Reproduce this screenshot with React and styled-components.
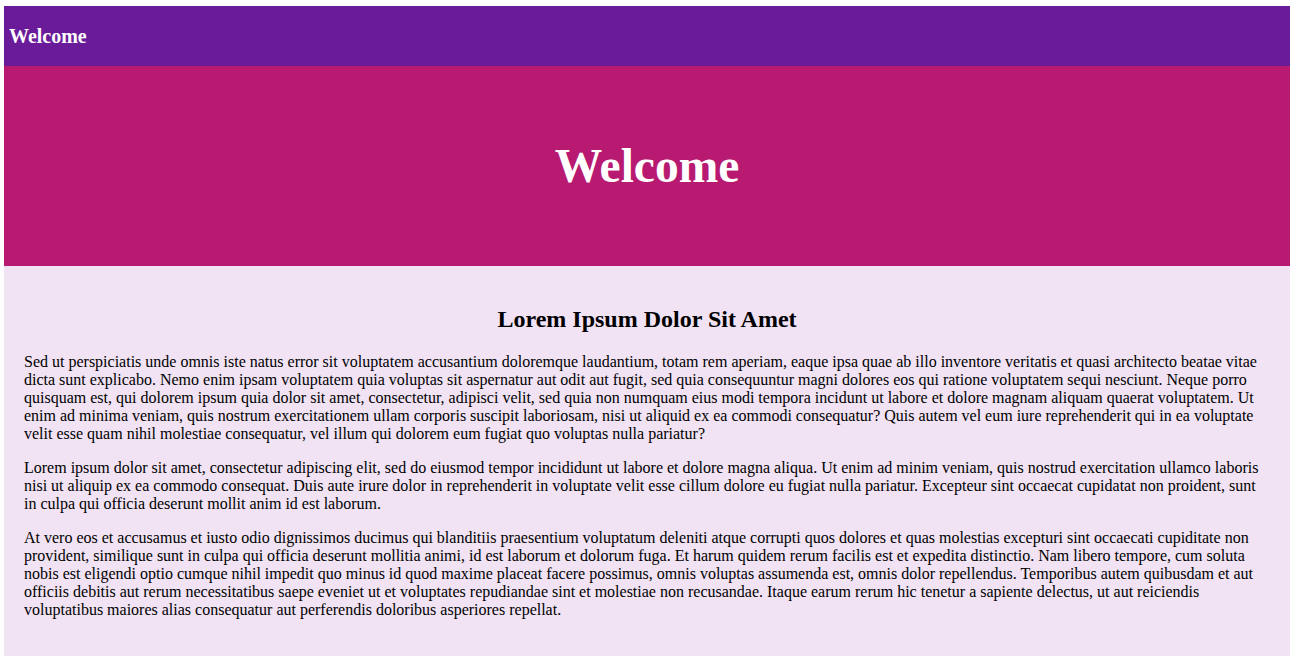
import React from "react";
import styled, { createGlobalStyle } from "styled-components";

const GlobalStyle = createGlobalStyle`
  body {
    margin: 6px 3px 6px 4px;
    font-family: "Liberation Serif", "Times New Roman", serif;
    background: #ffffff;
  }
`;

const TopBar = styled.header`
  height: 60px;
  display: flex;
  align-items: center;
  padding: 0 5px;
  background-color: #6a1b9a;
  color: #ffffff;

  & > h3 {
    margin: 0;
    font-size: 20px;
    font-weight: bold;
  }
`;

const Hero = styled.section`
  height: 200px;
  display: flex;
  align-items: center;
  justify-content: center;
  background-color: #b71a70;
  color: #ffffff;

  & > h1 {
    margin: 0;
    font-size: 47.5px;
    font-weight: bold;
  }
`;

const Content = styled.main`
  padding: 20px 20px 21px;
  background-color: #f1e3f4;
  color: #000000;

  & > h2 {
    margin: 20px 0;
    text-align: center;
    font-size: 24px;
    font-weight: bold;
  }

  & > p {
    margin: 16px 0;
    font-size: 16px;
    line-height: 18px;
  }
`;

const paragraphs = [
  "Sed ut perspiciatis unde omnis iste natus error sit voluptatem accusantium doloremque laudantium, totam rem aperiam, eaque ipsa quae ab illo inventore veritatis et quasi architecto beatae vitae dicta sunt explicabo. Nemo enim ipsam voluptatem quia voluptas sit aspernatur aut odit aut fugit, sed quia consequuntur magni dolores eos qui ratione voluptatem sequi nesciunt. Neque porro quisquam est, qui dolorem ipsum quia dolor sit amet, consectetur, adipisci velit, sed quia non numquam eius modi tempora incidunt ut labore et dolore magnam aliquam quaerat voluptatem. Ut enim ad minima veniam, quis nostrum exercitationem ullam corporis suscipit laboriosam, nisi ut aliquid ex ea commodi consequatur? Quis autem vel eum iure reprehenderit qui in ea voluptate velit esse quam nihil molestiae consequatur, vel illum qui dolorem eum fugiat quo voluptas nulla pariatur?",
  "Lorem ipsum dolor sit amet, consectetur adipiscing elit, sed do eiusmod tempor incididunt ut labore et dolore magna aliqua. Ut enim ad minim veniam, quis nostrud exercitation ullamco laboris nisi ut aliquip ex ea commodo consequat. Duis aute irure dolor in reprehenderit in voluptate velit esse cillum dolore eu fugiat nulla pariatur. Excepteur sint occaecat cupidatat non proident, sunt in culpa qui officia deserunt mollit anim id est laborum.",
  "At vero eos et accusamus et iusto odio dignissimos ducimus qui blanditiis praesentium voluptatum deleniti atque corrupti quos dolores et quas molestias excepturi sint occaecati cupiditate non provident, similique sunt in culpa qui officia deserunt mollitia animi, id est laborum et dolorum fuga. Et harum quidem rerum facilis est et expedita distinctio. Nam libero tempore, cum soluta nobis est eligendi optio cumque nihil impedit quo minus id quod maxime placeat facere possimus, omnis voluptas assumenda est, omnis dolor repellendus. Temporibus autem quibusdam et aut officiis debitis aut rerum necessitatibus saepe eveniet ut et voluptates repudiandae sint et molestiae non recusandae. Itaque earum rerum hic tenetur a sapiente delectus, ut aut reiciendis voluptatibus maiores alias consequatur aut perferendis doloribus asperiores repellat.",
];

const App = () => {
  return (
    <>
      <GlobalStyle />
      <TopBar>
        <h3>Welcome</h3>
      </TopBar>
      <Hero>
        <h1>Welcome</h1>
      </Hero>
      <Content>
        <h2>Lorem Ipsum Dolor Sit Amet</h2>
        {paragraphs.map((text, i) => (
          <p key={i}>{text}</p>
        ))}
      </Content>
    </>
  );
};

export default App;
